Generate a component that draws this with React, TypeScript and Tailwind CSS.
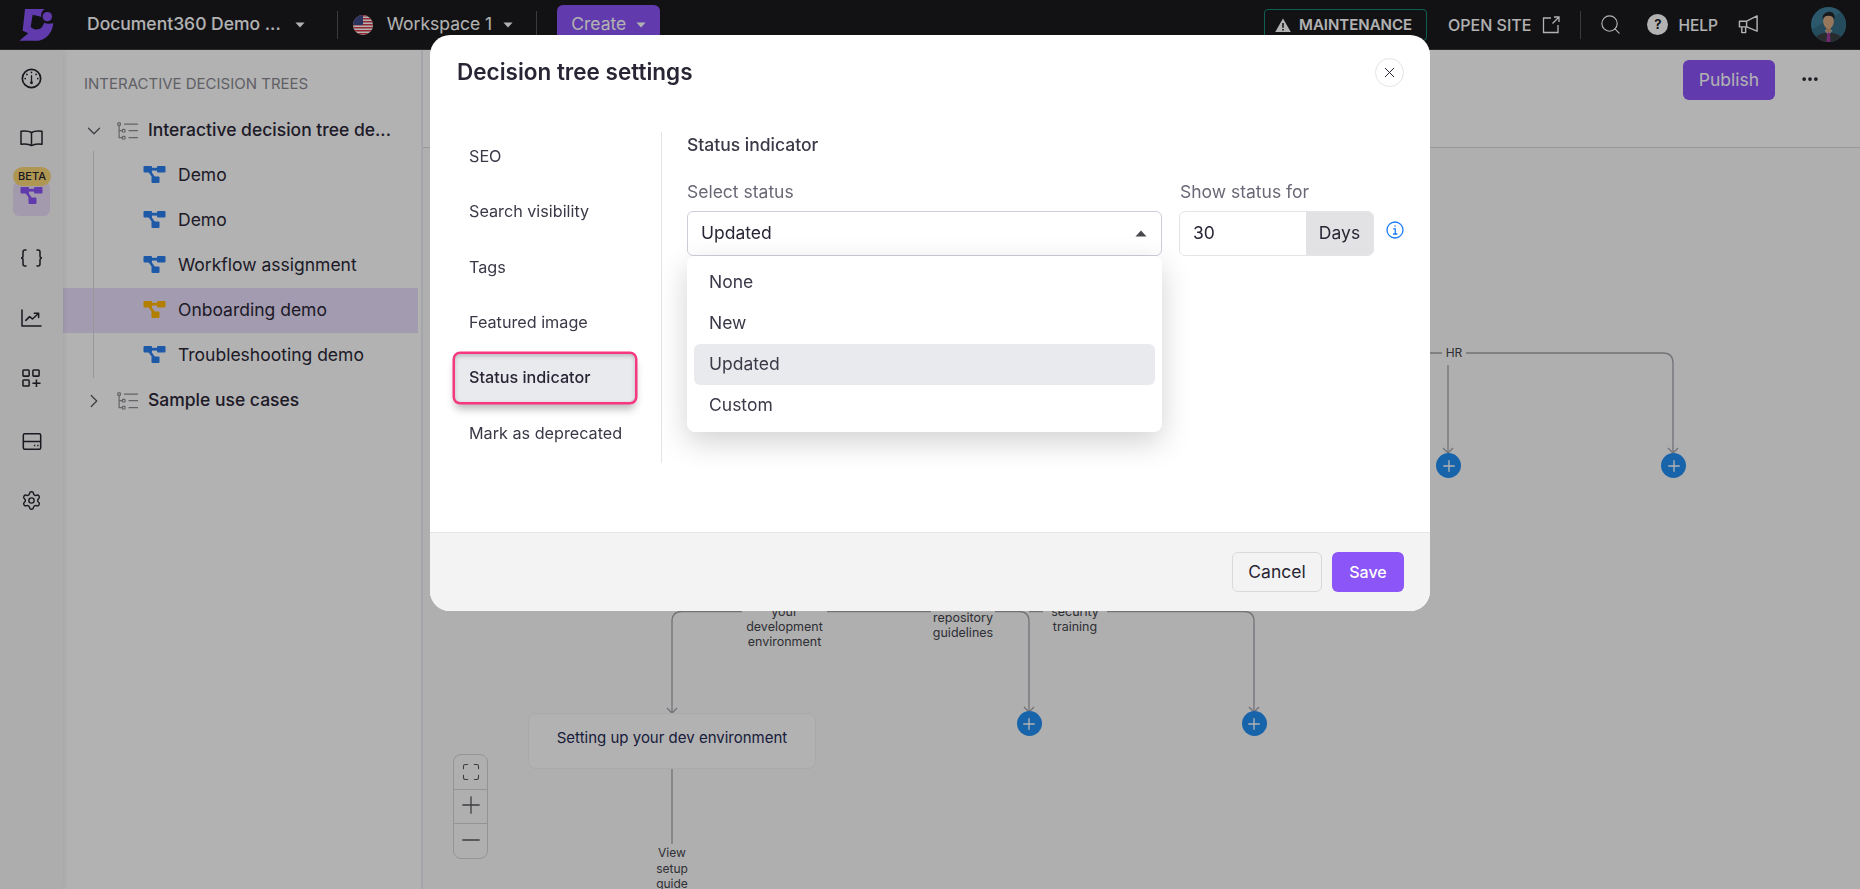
import { ChevronDown, ChevronRight, Ellipsis, Maximize, Minus, Plus, Search, Settings, X } from "lucide-react";

const TREE_ROWS = [
  { label: "Demo", active: false },
  { label: "Demo", active: false },
  { label: "Workflow assignment", active: false },
  { label: "Onboarding demo", active: true },
  { label: "Troubleshooting demo", active: false },
];

const SETTINGS_NAV = ["SEO", "Search visibility", "Tags", "Featured image", "Status indicator", "Mark as deprecated"];
const STATUS_OPTIONS = ["None", "New", "Updated", "Custom"];

function Caret({ className }: { className: string }) {
  return (
    <svg viewBox="0 0 12 7" className={className} fill="currentColor">
      <path d="M0.5 0.5h11L6 6.5z" />
    </svg>
  );
}

function Logo() {
  return (
    <svg viewBox="0 0 180 150" className="w-[60px] h-[50px] ml-[10px] shrink-0 text-[#8b55f8]" fill="currentColor">
      <path d="M45 27 L104 27 C96 32 92 40 94 50 L68 44 L62 80 C70 90 85 92 96 82 L103 68 C110 72 120 72 130 70 C128 95 110 120 85 122 L28 122 L55 100 L38 92 Z" />
      <circle cx="112" cy="50" r="14" />
    </svg>
  );
}

function Flag() {
  return (
    <svg viewBox="0 0 20 20" className="w-5 h-5 shrink-0">
      <defs>
        <clipPath id="flag-clip">
          <circle cx="10" cy="10" r="10" />
        </clipPath>
      </defs>
      <g clipPath="url(#flag-clip)">
        <rect width="20" height="20" fill="#fff" />
        {[0, 3, 6, 9, 12, 15, 18].map((y) => (
          <rect key={y} y={y} width="20" height="1.5" fill="#d8394a" />
        ))}
        <rect width="10" height="10" fill="#3b4a86" />
      </g>
    </svg>
  );
}

function Avatar() {
  return (
    <svg viewBox="0 0 36 36" className="w-[35px] h-[35px] shrink-0">
      <defs>
        <clipPath id="avatar-clip">
          <circle cx="18" cy="18" r="18" />
        </clipPath>
      </defs>
      <g clipPath="url(#avatar-clip)">
        <rect width="36" height="36" fill="#3f7f9b" />
        <path d="M0 36V24L36 2v34z" fill="#356d86" />
        <path d="M3 36c1-7 6-9 15-10 9 1 14 3 15 10z" fill="#3c3f44" />
        <path d="M14 24h8l-4 5z" fill="#e5e5e5" />
        <path d="M16.8 26h2.4l1 10h-4.4z" fill="#a23a9b" />
        <rect x="15.5" y="19" width="5" height="7" fill="#c69a76" />
        <ellipse cx="18" cy="15" rx="5.5" ry="7" fill="#d9ad86" />
        <path d="M12 13c-1-6 4-8 7-8 4 0 6 3 5 8-1-3-3-4-6-4s-5 1-6 4z" fill="#23262b" />
      </g>
    </svg>
  );
}

function TreeIcon({ className }: { className: string }) {
  return (
    <svg viewBox="0 0 22 17" className={className} fill="currentColor">
      <rect x="0" y="0" width="8.5" height="6.5" rx="1" />
      <rect x="13.5" y="0" width="8.5" height="6.5" rx="1" />
      <rect x="8" y="10.5" width="8" height="6.5" rx="1" />
      <path d="M6 1.8h10v2.8H6z" />
      <path d="M4.5 5.5l2.2-1.4 6 8.6-2.2 1.4z" />
    </svg>
  );
}

function TreeListIcon() {
  return (
    <svg viewBox="0 0 22 18" className="w-[22px] h-[18px] shrink-0 text-[#8f8f95]" fill="none" stroke="currentColor" strokeWidth="1.2">
      <rect x="0.8" y="0.8" width="2.6" height="2.6" rx="0.6" />
      <rect x="5.4" y="7.4" width="2.6" height="2.6" rx="0.6" />
      <rect x="5.4" y="14.4" width="2.6" height="2.6" rx="0.6" />
      <path d="M2.1 3.4V15.7H5.4M2.1 8.7H5.4" />
      <path d="M7 2.1H21M11.5 8.7H21M11.5 15.7H21" />
    </svg>
  );
}

function GaugeIcon() {
  return (
    <svg viewBox="0 0 22 22" className="w-[21px] h-[21px]" fill="none" stroke="currentColor" strokeWidth="1.8" strokeLinecap="round">
      <circle cx="11" cy="11" r="9.6" />
      <path d="M11 4.6v.1M6.2 6.6v.1M15.8 6.6v.1M4.4 11v.1M17.6 11v.1" />
      <path d="M11 8v6" strokeWidth="1.4" />
      <circle cx="11" cy="15.4" r="1.5" fill="currentColor" stroke="none" />
    </svg>
  );
}

function BookIcon() {
  return (
    <svg viewBox="0 0 23 17" className="w-[23px] h-[17px]" fill="none" stroke="currentColor" strokeWidth="1.5" strokeLinejoin="round">
      <path d="M11.5 2.5C9 1 4 .8 1 1.2V14.2C4 13.8 9 13.8 11.5 15.6 14 13.8 19 13.8 22 14.2V1.2C19 .8 14 1 11.5 2.5Z" />
      <path d="M11.5 2.5V15.6" />
    </svg>
  );
}

function BracesIcon() {
  return (
    <svg viewBox="0 0 23 18" className="w-[23px] h-[18px]" fill="none" stroke="currentColor" strokeWidth="1.5" strokeLinecap="round">
      <path d="M6 1H5C3.5 1 3 2 3 3V7C3 8 2 9 1 9 2 9 3 10 3 11V15C3 16 3.5 17 5 17H6" />
      <path d="M17 1H18C19.5 1 20 2 20 3V7C20 8 21 9 22 9 21 9 20 10 20 11V15C20 16 19.5 17 18 17H17" />
    </svg>
  );
}

function ChartIcon() {
  return (
    <svg viewBox="0 0 22 20" className="w-[21px] h-[19px]" fill="none" stroke="currentColor" strokeWidth="1.6" strokeLinecap="round" strokeLinejoin="round">
      <path d="M1 1v17h20" />
      <path d="M5 12l4-4 3 2.5 6-5.5" />
      <path d="M14 4.5h4.5V9" />
    </svg>
  );
}

function GridPlusIcon() {
  return (
    <svg viewBox="0 0 20 20" className="w-[19px] h-[19px]" fill="none" stroke="currentColor" strokeWidth="1.6">
      <rect x="1" y="1" width="6.5" height="6.5" rx="0.8" />
      <rect x="11.5" y="1" width="6.5" height="6.5" rx="0.8" />
      <rect x="1" y="11.5" width="6.5" height="6.5" rx="0.8" />
      <path d="M11 15h8.5M15.2 11v8" />
    </svg>
  );
}

function PanelIcon() {
  return (
    <svg viewBox="0 0 20 18" className="w-5 h-[17px]" fill="none" stroke="currentColor" strokeWidth="1.6">
      <rect x="0.8" y="0.8" width="18.4" height="16.4" rx="1.5" />
      <path d="M0.8 9h18.4" />
      <path d="M12 13.2h1.5M15.5 13.2h1.5" />
    </svg>
  );
}

function InfoIcon() {
  return (
    <svg viewBox="0 0 18 18" className="w-[18px] h-[18px] text-[#1c7bf5]" fill="none" stroke="currentColor" strokeWidth="1.3">
      <circle cx="9" cy="9" r="8" />
      <path d="M7.2 7.8H9.3V13M7 13h4.4" />
      <circle cx="9" cy="5" r="0.8" fill="currentColor" stroke="none" />
    </svg>
  );
}

function SideRail() {
  return (
    <div className="w-[63px] shrink-0 bg-[#f8f8f8] flex flex-col items-center pt-[10px] gap-[24px] text-[#25252d] shadow-[1px_0_5px_rgba(0,0,0,0.08)] relative z-10">
      <div className="h-9 flex items-center"><GaugeIcon /></div>
      <div className="h-9 flex items-center"><BookIcon /></div>
      <div className="h-9 relative flex items-start">
        <div className="w-[37px] h-[34px] mt-[2px] rounded-[6px] bg-[#eadff8] flex justify-center pt-[5px]">
          <TreeIcon className="w-[23px] h-[17px] text-[#8b55f8]" />
        </div>
        <span className="absolute -top-[13px] left-0 w-[38px] h-[19px] rounded-full bg-[#fcd777] text-[11px] leading-[19px] font-medium text-center">BETA</span>
      </div>
      <div className="h-9 flex items-center"><BracesIcon /></div>
      <div className="h-9 flex items-center"><ChartIcon /></div>
      <div className="h-9 flex items-center"><GridPlusIcon /></div>
      <div className="h-9 flex items-center mt-[3px]"><PanelIcon /></div>
      <div className="h-9 flex items-center -mt-[1px]"><Settings className="w-[21px] h-[21px]" strokeWidth={1.6} /></div>
    </div>
  );
}

function TreeSidebar() {
  return (
    <div className="w-[360px] shrink-0 bg-white border-r-2 border-[#ebedf3] pr-[3px]">
      <div className="pl-[21px] pt-[24px] h-[58px] text-[15px] leading-[20px] text-[#8a8a92] whitespace-nowrap">INTERACTIVE DECISION TREES</div>
      <div className="relative">
        <div className="h-[45px] flex items-center pl-[19.5px] text-[17.5px] font-medium text-[#2b2838]">
          <ChevronDown className="w-[22px] h-[22px] mr-[12.5px] text-[#55555e]" strokeWidth={1.3} />
          <TreeListIcon />
          <span className="ml-[9px] whitespace-nowrap">Interactive decision tree de...</span>
        </div>
        {TREE_ROWS.map((row, i) => (
          <div key={i} className={`h-[45px] flex items-center pl-[80px] text-[17.5px] text-[#2b2838] ${row.active ? "bg-[#eadefb]" : ""}`}>
            <TreeIcon className={`w-[23px] h-[17px] shrink-0 -mt-[3px] ${row.active ? "text-[#ffb700]" : "text-[#2b80f0]"}`} />
            <span className="ml-[12px]">{row.label}</span>
          </div>
        ))}
        <div className="h-[45px] flex items-center pl-[19.5px] text-[17.5px] font-medium text-[#2b2838]">
          <ChevronRight className="w-[22px] h-[22px] mr-[12.5px] text-[#55555e]" strokeWidth={1.3} />
          <TreeListIcon />
          <span className="ml-[9px]">Sample use cases</span>
        </div>
        <div className="absolute left-[30px] top-[43px] h-[227px] w-px bg-[#d9d9dd]" />
      </div>
    </div>
  );
}

function PlusDot({ className }: { className: string }) {
  return (
    <div className={`absolute w-[25px] h-[25px] rounded-full bg-[#2390f5] flex items-center justify-center text-white ${className}`}>
      <Plus className="w-[18px] h-[18px]" strokeWidth={1.8} />
    </div>
  );
}

function Canvas() {
  return (
    <div className="relative flex-1 overflow-hidden">
      <svg className="absolute inset-0 w-full h-full" fill="none" stroke="#a4a4ab" strokeWidth="1.3">
        <path d="M249 565V473.5Q249 463.5 259 463.5H596Q606 463.5 606 473.5V564" />
        <path d="M606 463.5H821Q831 463.5 831 473.5V564" />
        <path d="M244 560l5 5 5-5M601 559l5 5 5-5M826 559l5 5 5-5" />
        <path d="M249 621V696" />
        <path d="M1007 205H1019M1043 205H1240Q1250 205 1250 215V305" />
        <path d="M1025 217V305" />
        <path d="M1020 300l5 5 5-5M1245 300l5 5 5-5" />
      </svg>

      <div className="absolute left-[319px] top-[456px] w-[85px] bg-[#fbfbfb] text-center text-[12.5px] leading-[15px] text-[#44444d]">your<br />development<br />environment</div>
      <div className="absolute left-[508px] top-[462px] w-[64px] bg-[#fbfbfb] text-center text-[12.5px] leading-[15px] text-[#44444d]">repository<br />guidelines</div>
      <div className="absolute left-[620px] top-[456px] w-[64px] bg-[#fbfbfb] text-center text-[12.5px] leading-[15px] text-[#44444d]">security<br />training</div>
      <div className="absolute left-[1019px] top-[197px] w-[24px] bg-[#fbfbfb] text-center text-[12px] leading-[15px] text-[#44444d]">HR</div>

      <PlusDot className="left-[1013px] top-[305px]" />
      <PlusDot className="left-[1238px] top-[305px]" />
      <PlusDot className="left-[593.5px] top-[563px]" />
      <PlusDot className="left-[818.5px] top-[563px]" />

      <div className="absolute left-[105px] top-[565px] w-[288px] h-[56px] rounded-lg bg-white border border-[#f3f3f3] text-center pt-[14px] text-[15px] leading-[20px] text-[#1f2a55]">
        Setting up your dev environment
      </div>
      <div className="absolute left-[219px] top-[697px] w-[60px] bg-[#fbfbfb] text-center text-[12px] leading-[15.5px] text-[#44444d]">View<br />setup<br />guide</div>

      <div className="absolute left-[30px] top-[606px] w-[35px] h-[105px] rounded-lg border border-[#d4d4d8] flex flex-col text-[#55555e] divide-y divide-[#d4d4d8]">
        <div className="h-[35px] flex items-center justify-center"><Maximize className="w-[20px] h-[20px]" strokeWidth={1.3} /></div>
        <div className="h-[34px] pb-[3px] flex items-center justify-center"><Plus className="w-[28px] h-[28px]" strokeWidth={1.1} /></div>
        <div className="h-[34px] pb-[2px] flex items-center justify-center"><Minus className="w-[28px] h-[28px]" strokeWidth={1.2} /></div>
      </div>
    </div>
  );
}

function SettingsModal() {
  return (
    <div className="fixed inset-0 z-50 bg-black/30 flex justify-center items-start pt-[35px]">
      <div className="w-[1000px] h-[576px] bg-white rounded-[20px] flex flex-col overflow-hidden">
        <div className="h-[74px] shrink-0 flex items-center justify-between pl-[27px] pr-[26px]">
          <h2 className="text-[22.5px] font-semibold text-[#2a2535]">Decision tree settings</h2>
          <button className="w-[29px] h-[29px] rounded-full border border-[#e4e4e7] flex items-center justify-center text-[#2a2535]">
            <X className="w-[17px] h-[17px]" strokeWidth={1.4} />
          </button>
        </div>

        <div className="flex-1 flex mt-[23px] items-start">
          <div className="ml-[25px] w-[207px] h-[331px] border-r border-[#e4e4e7] flex flex-col gap-[7.4px] shrink-0">
            {SETTINGS_NAV.map((item) => (
              <div
                key={item}
                className={`w-[180px] h-[48px] shrink-0 flex items-center px-[14px] text-[16.2px] whitespace-nowrap rounded-[5px] ${
                  item === "Status indicator"
                    ? "bg-[#e9eaee] font-medium text-[#2a2535] ring-[2.5px] ring-[#f5387f] shadow-[inset_0_2px_4px_rgba(0,0,0,0.2),0_7px_8px_rgba(0,0,0,0.28)]"
                    : "text-[#3b3847]"
                }`}
              >
                {item}
              </div>
            ))}
          </div>

          <div className="pl-[25px] flex-1">
            <div className="h-[26px] text-[17.5px] leading-[26px] font-medium text-[#3b3847]">Status indicator</div>
            <div className="flex items-start mt-[24px]">
              <div className="w-[475px]">
                <div className="h-[20px] text-[17.5px] leading-[20px] text-[#6b6776]">Select status</div>
                <div className="relative mt-[9px]">
                  <div className="h-[45px] rounded-[6px] border border-[#d0ccd8] flex items-center justify-between pl-[13px] pr-[14px] text-[17.5px] text-[#2a2535]">
                    Updated
                    <Caret className="w-[12px] h-[7px] rotate-180 text-[#48484f]" />
                  </div>
                  <div className="absolute left-0 right-0 top-full z-10 bg-white rounded-[8px] px-[7px] pt-[6px] pb-[6px] shadow-[0_10px_30px_rgba(0,0,0,0.18)]">
                    {STATUS_OPTIONS.map((option) => (
                      <div key={option} className={`h-[41px] flex items-center pl-[15px] text-[17.5px] text-[#3b3847] rounded-[6px] ${option === "Updated" ? "bg-[#e9eaee]" : ""}`}>
                        {option}
                      </div>
                    ))}
                  </div>
                </div>
              </div>
              <div className="ml-[17px] w-[195px]">
                <div className="h-[20px] pl-px text-[17.5px] leading-[20px] text-[#6b6776] whitespace-nowrap">Show status for</div>
                <div className="mt-[9px] h-[45px] rounded-[6px] border border-[#e4e4e7] flex overflow-hidden text-[17.5px] text-[#2a2535]">
                  <div className="flex-1 flex items-center pl-[13px]">30</div>
                  <div className="w-[67px] bg-[#e2e2e5] flex items-center justify-center">Days</div>
                </div>
              </div>
              <div className="ml-[12px] mt-[39px]"><InfoIcon /></div>
            </div>
          </div>
        </div>

        <div className="h-[79px] shrink-0 bg-[#f3f3f3] border-t border-[#e5e5e5] flex justify-end gap-[10px] pt-[19px] pr-[26px]">
          <button className="w-[90px] h-[40px] rounded-[6px] border border-[#d9d9dd] text-[17.5px] text-[#2a2535]">Cancel</button>
          <button className="w-[72px] h-[40px] rounded-[6px] bg-[#8b55f8] text-[16px] font-medium text-white">Save</button>
        </div>
      </div>
    </div>
  );
}

export default function App() {
  return (
    <div className="w-[1860px] h-[889px] overflow-hidden flex flex-col font-['Inter',sans-serif] bg-white">
      <header className="h-[50px] shrink-0 bg-[#1b1b1f] border-b border-[#3a3a3f] flex items-center justify-between text-white">
        <div className="flex items-center">
          <Logo />
          <span className="ml-[17px] text-[17.5px] font-medium whitespace-nowrap">Document360 Demo ...</span>
          <Caret className="ml-[14px] w-[10px] h-[6px]" />
          <div className="ml-[32px] w-px h-[28px] bg-[#55555a]" />
          <div className="ml-[15px]"><Flag /></div>
          <span className="ml-[14px] text-[17.5px] whitespace-nowrap">Workspace 1</span>
          <Caret className="ml-[11px] w-[10px] h-[6px]" />
          <div className="ml-[23px] w-px h-[28px] bg-[#55555a]" />
          <button className="ml-[20px] w-[103px] h-[40px] rounded-[6px] bg-[#8b55f8] flex items-center justify-center gap-[10px] text-[17.5px]">
            Create
            <Caret className="w-[10px] h-[6px]" />
          </button>
        </div>
        <div className="flex items-center pr-[14px]">
          <div className="w-[163px] h-[32px] pt-[1px] rounded-[4px] border border-[#138a78] flex items-center pl-[10px] gap-[8px]">
            <svg viewBox="0 0 16 14" className="w-[16px] h-[14px]" fill="currentColor" fillRule="evenodd">
              <path d="M8 0.5L15.8 14H0.2zM7.2 5V9.8H8.8V5zM7.2 11V12.6H8.8V11z" />
            </svg>
            <span className="text-[15px] font-semibold">MAINTENANCE</span>
          </div>
          <span className="ml-[21px] text-[16px] font-medium whitespace-nowrap">OPEN SITE</span>
          <svg viewBox="0 0 18 18" className="ml-[11px] w-[18px] h-[18px]" fill="none" stroke="currentColor" strokeWidth="1.3">
            <path d="M9 2H1.5V16.5H16V9M10.5 7.5L17 1M12 1H17V6" />
          </svg>
          <div className="ml-[20px] w-px h-[28px] bg-[#55555a]" />
          <Search className="ml-[18px] w-[23px] h-[23px]" strokeWidth={1.2} />
          <div className="ml-[25px] w-[21px] h-[21px] rounded-full bg-white text-[#1b1b1f] text-[13px] font-bold flex items-center justify-center">?</div>
          <span className="ml-[10px] mt-[2px] text-[15.5px] font-medium">HELP</span>
          <svg viewBox="0 0 22 22" className="ml-[20px] w-[21px] h-[21px]" fill="none" stroke="currentColor" strokeWidth="1.5" strokeLinejoin="round">
            <path d="M1.5 7.5H9L20 2V18L9 13.5H1.5z" />
            <path d="M4 13.5V19.5H8V13.5M9 7.5V13.5" />
          </svg>
          <div className="ml-[52px]"><Avatar /></div>
        </div>
      </header>

      <div className="flex-1 flex min-h-0">
        <SideRail />
        <TreeSidebar />
        <main className="flex-1 flex flex-col bg-[#fbfbfb] min-w-0">
          <div className="h-[98px] shrink-0 border-b border-[#d9d9dd] bg-white flex justify-end pt-[10px] pr-[40px]">
            <button className="w-[92px] h-[40px] rounded-[6px] bg-[#8b55f8] text-[17.5px] text-white">Publish</button>
            <Ellipsis className="ml-[25px] mt-[9px] w-[20px] h-[20px] text-[#25252d]" strokeWidth={2.5} />
          </div>
          <Canvas />
        </main>
      </div>

      <SettingsModal />
    </div>
  );
}
